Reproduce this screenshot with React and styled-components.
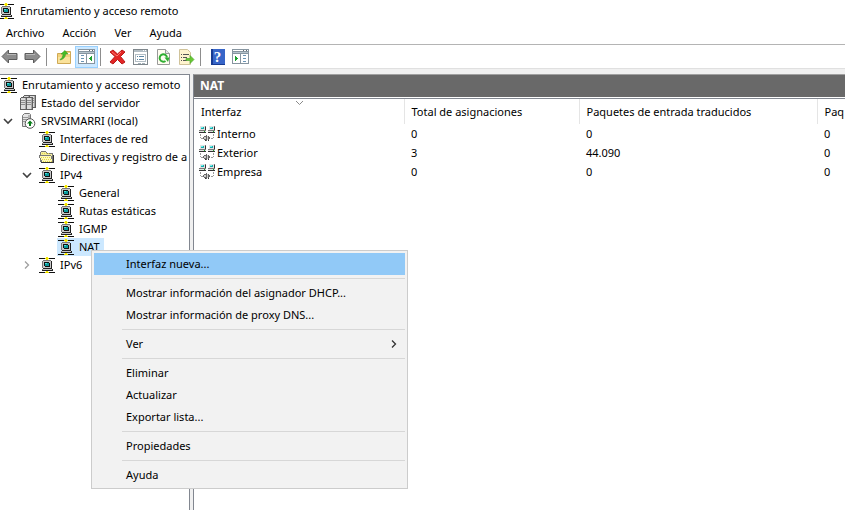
import React from "react";
import styled, { createGlobalStyle, css } from "styled-components";

const GlobalStyle = createGlobalStyle`
  * { box-sizing: border-box; }
  html, body, #root { height: 100%; }
  body {
    margin: 0;
    overflow: hidden;
    background: #fff;
    color: #000;
    font: 11px/18px "Noto Sans", "Open Sans", sans-serif;
  }
  button { font: inherit; color: inherit; border: 0; background: none; padding: 0; text-align: left; }
`;

const Page = styled.div`
  display: flex;
  flex-direction: column;
  height: 100%;
  position: relative;
`;
const TitleBar = styled.header`
  display: flex;
  align-items: center;
  gap: 6px;
  height: 21px;
  margin-left: -2px;
  white-space: nowrap;
`;
const Title = styled.h1`
  margin: 0;
  font-size: 11px;
  font-weight: 400;
`;
const MenuBar = styled.nav`
  display: flex;
  align-items: center;
  gap: 18px;
  height: 24px;
  padding-left: 6px;
  border-bottom: 1px solid #b4b4b4;
`;
const MenuButton = styled.button`
  height: 20px;
`;
const ToolBar = styled.div`
  display: flex;
  align-items: center;
  height: 23px;
  margin-left: -2px;
`;
const ToolButton = styled.button`
  display: flex;
  align-items: center;
  justify-content: center;
  width: 23px;
  height: 22px;
  ${(p) => p.$active && css`
    background: #cce8ff;
    border: 1px solid #99d1ff;
  `}
`;
const ToolDivider = styled.span`
  width: 1px;
  height: 18px;
  margin: 0 5px 0 2px;
  background: #8d8d8d;
`;
const Workspace = styled.main`
  flex: 1;
  min-height: 0;
  display: grid;
  grid-template-columns: 190px minmax(0, 1fr);
  column-gap: 3px;
  padding-top: 5px;
  background: #f0f0f0;
  border-top: 1px solid #e0e0e0;
`;
const TreePane = styled.ul`
  margin: 0;
  padding: 1px 0 0;
  list-style: none;
  overflow: hidden;
  background: #fff;
  border-top: 1px solid #828790;
  border-right: 1px solid #828790;
`;
const TreeRow = styled.li`
  display: flex;
  align-items: center;
  height: 18px;
  padding-left: ${(p) => Math.max(0, p.$level - 1) * 19}px;
  white-space: nowrap;
`;
const Twist = styled.span`
  display: flex;
  flex: none;
  align-items: center;
  justify-content: center;
  width: 19px;
  padding-right: 3px;
`;
const TreeNode = styled.span`
  display: flex;
  align-items: center;
  gap: 5px;
  height: 18px;
  padding: 0 4px 0 1px;
  background: ${(p) => (p.$selected ? "#cce8ff" : "transparent")};
`;
const ListPane = styled.section`
  display: flex;
  flex-direction: column;
  overflow: hidden;
  background: #fff;
  border-left: 1px solid #828790;
  border-top: 1px solid #a0a0a0;
`;
const ListTitle = styled.h2`
  margin: 0;
  padding-left: 6px;
  font-size: 12px;
  font-weight: 700;
  line-height: 22px;
  color: #fff;
  background: #696969;
`;
const ListBody = styled.div`
  flex: 1;
  margin-top: 1px;
  border-top: 1px solid #828790;
  overflow: hidden;
`;
const Table = styled.table`
  table-layout: fixed;
  width: 100%;
  border-collapse: collapse;
  white-space: nowrap;
`;
const Col = styled.col`
  width: ${(p) => p.$width}px;
`;
const HeadCell = styled.th`
  position: relative;
  height: 25px;
  padding: 0 0 0 7px;
  font-weight: 400;
  text-align: left;
  border-right: 1px solid #e5e5e5;
  &:last-child { border-right: 0; }
`;
const SortMark = styled.svg`
  position: absolute;
  top: 1px;
  left: 50%;
  margin-left: -4px;
`;
const Cell = styled.td`
  height: 19px;
  padding: 0 0 0 7px;
`;
const NameCell = styled.td`
  height: 19px;
  padding: 0 5px;
`;
const IconLabel = styled.span`
  display: flex;
  align-items: center;
  gap: 2px;
`;
const ContextMenu = styled.div`
  position: absolute;
  left: 91px;
  top: 250px;
  width: 317px;
  padding: 2px;
  background: #f2f2f2;
  border: 1px solid #ccc;
`;
const ContextItem = styled.button`
  display: flex;
  align-items: center;
  justify-content: space-between;
  width: 100%;
  height: 22px;
  padding: 0 6px 0 32px;
  background: ${(p) => (p.$active ? "#91c9f7" : "transparent")};
`;
const ContextRule = styled.hr`
  height: 1px;
  margin: 3px 0 3px 28px;
  border: 0;
  background: #d7d7d7;
`;

const Icon = ({ w = 16, h = 16, children }) => (
  <svg width={w} height={h} viewBox={`0 0 ${w} ${h}`} shapeRendering="crispEdges" aria-hidden="true">
    {children}
  </svg>
);

const NodeIcon = () => (
  <Icon>
    <path fill="#111" d="M0 1h16v1H0zM0 15h16v1H0z" />
    <path fill="#f4e600" d="M7 0h2v1H7zM6 1h4v1H6zM7 2h2v1H7zM7 14h2v1H7zM6 15h4v1H6z" />
    <path fill="#777" d="M4 3h8v1H4zM3 4h1v7H3z" />
    <path fill="#c8c8c8" d="M4 4h8v7H4zM4 12h9v1H4z" />
    <path fill="#222" d="M12 4h1v7h-1zM4 11h9v1H4zM3 13h10v1H3zM13 12h1v2h-1z" />
    <path fill="#777" d="M3 12h1v1H3z" />
    <path fill="#111" d="M5 5h6v5H5z" />
    <path fill="#c8c8c8" d="M5 9h1v1H5zM10 5h1v1h-1z" />
    <path fill="#0a9a9c" d="M6 6h4v3H6z" />
    <path fill="#45e0dc" d="M6 6h2v1H6z" />
  </Icon>
);

const ServersIcon = () => (
  <Icon>
    {[[9, 0], [3, 0], [6, 2], [0, 2]].map(([x, y]) => (
      <g key={`${x}-${y}`}>
        <path fill="#5f5f5f" d={`M${x + 1} ${y}h6v13h-7v-12h1z`} />
        <path fill="#dcdcdc" d={`M${x + 1} ${y + 1}h4v11h-4z`} />
        <path fill="#a9a9a9" d={`M${x + 5} ${y + 1}h1v11h-1z`} />
        <path fill="#8f8f8f" d={`M${x + 1} ${y + 3}h4v1h-4zM${x + 1} ${y + 5}h4v1h-4zM${x + 1} ${y + 7}h4v1h-4z`} />
      </g>
    ))}
  </Icon>
);

const ServerUpIcon = () => (
  <svg width="16" height="16" viewBox="0 0 16 16" aria-hidden="true">
    <path fill="#e4e4e4" stroke="#777" d="M2.500 2.500l2-2h5l1 1v12h-8z" />
    <path stroke="#999" d="M3 4.500h5M3 6.500h5M3 8.500h4" />
    <path fill="#b5b5b5" d="M8 2h2v9H8z" />
    <circle cx="10" cy="10.500" r="4.800" fill="#fff" stroke="#555" />
    <path fill="#087c18" d="M10 7.500l3 3h-2V13H9v-2.500H7z" />
  </svg>
);

const FolderIcon = () => (
  <Icon>
    <path fill="#777" d="M1 3h1V2h5v1h1v1h6v9h1v1H2v-1H1z" />
    <path fill="#f4ee9c" d="M2 3h5v1h1v1h5v2H4v1H3v3H2z" />
    <path fill="#333" d="M14 6h1v7h-1zM2 13h13v1H2z" />
    <path fill="#fffab8" d="M1 7h11v1h1v3h1v2H3v-2H2V9H1z" />
    <path stroke="#e0d44a" strokeDasharray="1 1" d="M2 8.500h10M3 10.500h10M4 12.500h10M3 4.500h8" />
    <path fill="#777" d="M0 6h12v1H0zM0 7h1v2H0zM1 9h1v2H1zM2 11h1v2H2zM12 7h1v3h-1zM13 10h1v3h-1z" />
  </Icon>
);

const NicIcon = () => (
  <Icon>
    {[0, 9].map((x) => (
      <g key={x}>
        <path fill="#777" d={`M${x + 1} 0h6v4h-6zM${x} 4h7v1h-7z`} />
        <path fill="#e2e2e2" d={`M${x + 1} 0h5v4h-5zM${x} 5h7v1h-7z`} />
        <path fill="#333" d={`M${x} 6h7v1h-7zM${x + 6} 1h1v3h-1z`} />
        <path fill="#1ba9ab" d={`M${x + 2} 1h3v2h-3z`} />
        <path fill="#6ff5f0" d={`M${x + 2} 1h2v1h-2z`} />
        <path fill="#16a329" d={`M${x + 5} 5h1v1h-1z`} />
      </g>
    ))}
    <path fill="#999" d="M1 8h1v2H1zM1 11h1v1H1zM2 12h2v1H2zM14 8h1v2h-1zM14 11h1v1h-1zM12 12h2v1h-2z" />
    <path fill="#666" d="M5 10h2v1H5zM4 11h1v2H4zM5 13h2v1H5zM7 9h1v6H7zM9 10h1v4H9zM10 11h1v2h-1z" />
    <path fill="#ccc" d="M5 11h2v2H5zM8 10h1v4H8z" />
    <path fill="#333" d="M9 14h1v1H9zM6 14h1v1H6z" />
  </Icon>
);

const ArrowIcon = ({ right }) => (
  <svg width="17" height="15" viewBox="0 0 17 15" aria-hidden="true">
    <path
      fill="#8d8d8d"
      stroke="#5b5b5b"
      strokeLinejoin="round"
      d={right ? "M16 7.500L9.500 1v3.500H1v6h8.500V14z" : "M1 7.500L7.500 1v3.500H16v6H7.500V14z"}
    />
    <path stroke="#b8b8b8" d={right ? "M2 5.500h9" : "M6 5.500h9"} />
  </svg>
);

const UpFolderIcon = () => (
  <svg width="16" height="16" viewBox="0 0 16 16" aria-hidden="true">
    <path fill="#f2d27c" stroke="#cfa955" d="M1.500 4.500h6l1-2h6v12h-13z" />
    <path fill="#fae29b" d="M2 8h12v6H2z" />
    <path fill="#fff" d="M10 4h4v1h-4z" />
    <path fill="#45be24" stroke="#3a9a26" strokeWidth=".6" d="M4 10.500c2-1 3-3 3-5.500H5L9 1.500 12 5H9.500c0 3-2 5-5 6z" />
  </svg>
);

const PaneIcon = ({ right }) => (
  <Icon w={17} h={15}>
    <path fill="#8795a0" d="M0 0h17v15H0z" />
    <path fill="#fff" d="M1 1h15v1H1zM1 5h7v9H1zM9 5h7v9H9z" />
    <path fill="#b6c4cc" d="M1 3h15v1H1z" />
    <path fill="#5c6870" d="M11 1h1v1h-1zM14 1h1v1h-1z" />
    <path fill="#6b94b4" d={right ? "M11 6h3v1h-3zM11 9h3v1h-3zM11 12h3v1h-3z" : "M3 6h3v1H3zM3 9h3v1H3zM3 12h3v1H3z"} />
    <path fill="#1aa12e" d={right ? "M3 7h1v1h1v1h1v1H5v1H4v1H3z" : "M13 7h1v5h-1v-1h-1v-1h-1V9h1V8h1z"} />
  </Icon>
);

const DeleteIcon = () => (
  <svg width="17" height="16" viewBox="0 0 17 16" aria-hidden="true">
    <path fill="#e32626" stroke="#b91a1a" strokeLinejoin="round" d="M1 3l3-2 4.500 4L13 1l3 2-4.500 4.500L16 13l-3 2-4.500-4.500L4 15l-3-2 5-5.500z" />
    <path stroke="#ff7770" d="M3 3l5 4 4-4" fill="none" />
  </svg>
);

const PropertiesIcon = () => (
  <Icon w={15} h={16}>
    <path fill="#7f878c" d="M0 0h15v16H0z" />
    <path fill="#fff" d="M1 1h13v14H1z" />
    <path fill="#b3bec5" d="M1 1h13v2H1zM2 5h11v8H2z" />
    <path fill="#fff" d="M10 1h1v1h-1zM12 1h1v1h-1zM3 6h9v6H3z" />
    <path fill="#5c86a5" d="M4 7h1v1H4zM6 7h5v1H6zM4 10h1v1H4zM6 10h5v1H6z" />
    <path fill="#a3b0b8" d="M5 14h3v1H5zM9 14h3v1H9z" />
  </Icon>
);

const RefreshIcon = () => (
  <svg width="15" height="16" viewBox="0 0 15 16" aria-hidden="true">
    <path fill="#fffdf1" stroke="#999" d="M1.500.5h8l4 4v11h-12z" />
    <path fill="#e7e7e7" stroke="#999" d="M9.500.5v4h4" />
    <path fill="none" stroke="#2fae32" strokeWidth="2" d="M11 8.500A3.700 3.700 0 1 0 9.500 12" />
    <path fill="#2fae32" d="M8.500 8.500h5L12 13z" />
  </svg>
);

const ExportIcon = () => (
  <svg width="17" height="16" viewBox="0 0 17 16" aria-hidden="true">
    <path fill="#fff4cf" stroke="#d0c39a" d="M1.500.5h8l3 3v12h-11z" />
    <path stroke="#555" d="M3 5.500h1M5 5.500h6M3 8.500h1M5 8.500h4M3 11.500h1M5 11.500h4" />
    <path fill="#68c832" stroke="#4fa832" strokeWidth=".7" d="M8 9.500h4V6.500l4 4-4 4v-3H8z" />
  </svg>
);

const HelpSquare = styled.span`
  width: 14px;
  height: 16px;
  font: 700 15px/16px "Liberation Serif", serif;
  text-align: center;
  color: #fff;
  background: linear-gradient(90deg, #173a91 2px, #3765c8 2px);
  border-bottom: 1px solid #173a91;
`;

const ChevronDown = () => (
  <svg width="10" height="10" viewBox="0 0 10 10" aria-hidden="true">
    <path fill="none" stroke="#404040" strokeWidth="1.600" d="M1 3l4 4 4-4" />
  </svg>
);
const ChevronRight = ({ color = "#a0a0a0" }) => (
  <svg width="10" height="10" viewBox="0 0 10 10" aria-hidden="true">
    <path fill="none" stroke={color} strokeWidth="1.300" d="M3 1.500L6.500 5 3 8.500" />
  </svg>
);

const tree = [
  { level: 0, label: "Enrutamiento y acceso remoto", icon: NodeIcon },
  { level: 1, label: "Estado del servidor", icon: ServersIcon },
  { level: 1, label: "SRVSIMARRI (local)", icon: ServerUpIcon, open: true },
  { level: 2, label: "Interfaces de red", icon: NodeIcon },
  { level: 2, label: "Directivas y registro de a", icon: FolderIcon },
  { level: 2, label: "IPv4", icon: NodeIcon, open: true },
  { level: 3, label: "General", icon: NodeIcon },
  { level: 3, label: "Rutas estáticas", icon: NodeIcon },
  { level: 3, label: "IGMP", icon: NodeIcon },
  { level: 3, label: "NAT", icon: NodeIcon, selected: true },
  { level: 2, label: "IPv6", icon: NodeIcon, open: false },
];

const tools = [
  { label: "Atrás", icon: <ArrowIcon /> },
  { label: "Adelante", icon: <ArrowIcon right /> },
  null,
  { label: "Subir un nivel", icon: <UpFolderIcon /> },
  { label: "Mostrar u ocultar árbol", icon: <PaneIcon />, active: true },
  null,
  { label: "Eliminar", icon: <DeleteIcon /> },
  { label: "Propiedades", icon: <PropertiesIcon /> },
  { label: "Actualizar", icon: <RefreshIcon /> },
  { label: "Exportar lista", icon: <ExportIcon /> },
  null,
  { label: "Ayuda", icon: <HelpSquare>?</HelpSquare> },
  { label: "Mostrar u ocultar panel", icon: <PaneIcon right /> },
];

const rows = [
  ["Interno", "0", "0", "0"],
  ["Exterior", "3", "44.090", "0"],
  ["Empresa", "0", "0", "0"],
];

const contextItems = [
  { label: "Interfaz nueva...", active: true },
  null,
  { label: "Mostrar información del asignador DHCP..." },
  { label: "Mostrar información de proxy DNS..." },
  null,
  { label: "Ver", submenu: true },
  null,
  { label: "Eliminar" },
  { label: "Actualizar" },
  { label: "Exportar lista..." },
  null,
  { label: "Propiedades" },
  null,
  { label: "Ayuda" },
];

export default function App() {
  return (
    <Page>
      <GlobalStyle />
      <TitleBar>
        <NodeIcon />
        <Title>Enrutamiento y acceso remoto</Title>
      </TitleBar>
      <MenuBar>
        {["Archivo", "Acción", "Ver", "Ayuda"].map((m) => (
          <MenuButton key={m}>{m}</MenuButton>
        ))}
      </MenuBar>
      <ToolBar role="toolbar">
        {tools.map((t, i) =>
          t ? (
            <ToolButton key={i} aria-label={t.label} $active={t.active}>
              {t.icon}
            </ToolButton>
          ) : (
            <ToolDivider key={i} />
          )
        )}
      </ToolBar>
      <Workspace>
        <TreePane role="tree">
          {tree.map(({ level, label, icon: Glyph, open, selected }) => (
            <TreeRow key={label} role="treeitem" aria-level={level + 1} aria-expanded={open} aria-selected={!!selected} $level={level}>
              {level > 0 && <Twist>{open === true ? <ChevronDown /> : open === false ? <ChevronRight /> : null}</Twist>}
              <TreeNode $selected={selected}>
                <Glyph />
                {label}
              </TreeNode>
            </TreeRow>
          ))}
        </TreePane>
        <ListPane>
          <ListTitle>NAT</ListTitle>
          <ListBody>
            <Table>
              <colgroup>
                <Col $width={210} />
                <Col $width={175} />
                <Col $width={238} />
                <col />
              </colgroup>
              <thead>
                <tr>
                  <HeadCell>
                    Interfaz
                    <SortMark width="9" height="6" viewBox="0 0 9 6" aria-hidden="true">
                      <path fill="none" stroke="#8a8a8a" d="M1 1l3.500 3.500L8 1" />
                    </SortMark>
                  </HeadCell>
                  <HeadCell>Total de asignaciones</HeadCell>
                  <HeadCell>Paquetes de entrada traducidos</HeadCell>
                  <HeadCell>Paq</HeadCell>
                </tr>
              </thead>
              <tbody>
                {rows.map(([name, ...values]) => (
                  <tr key={name}>
                    <NameCell>
                      <IconLabel>
                        <NicIcon />
                        {name}
                      </IconLabel>
                    </NameCell>
                    {values.map((v, i) => (
                      <Cell key={i}>{v}</Cell>
                    ))}
                  </tr>
                ))}
              </tbody>
            </Table>
          </ListBody>
        </ListPane>
      </Workspace>
      <ContextMenu role="menu">
        {contextItems.map((item, i) =>
          item ? (
            <ContextItem key={i} role="menuitem" $active={item.active}>
              {item.label}
              {item.submenu && <ChevronRight color="#333" />}
            </ContextItem>
          ) : (
            <ContextRule key={i} />
          )
        )}
      </ContextMenu>
    </Page>
  );
}
